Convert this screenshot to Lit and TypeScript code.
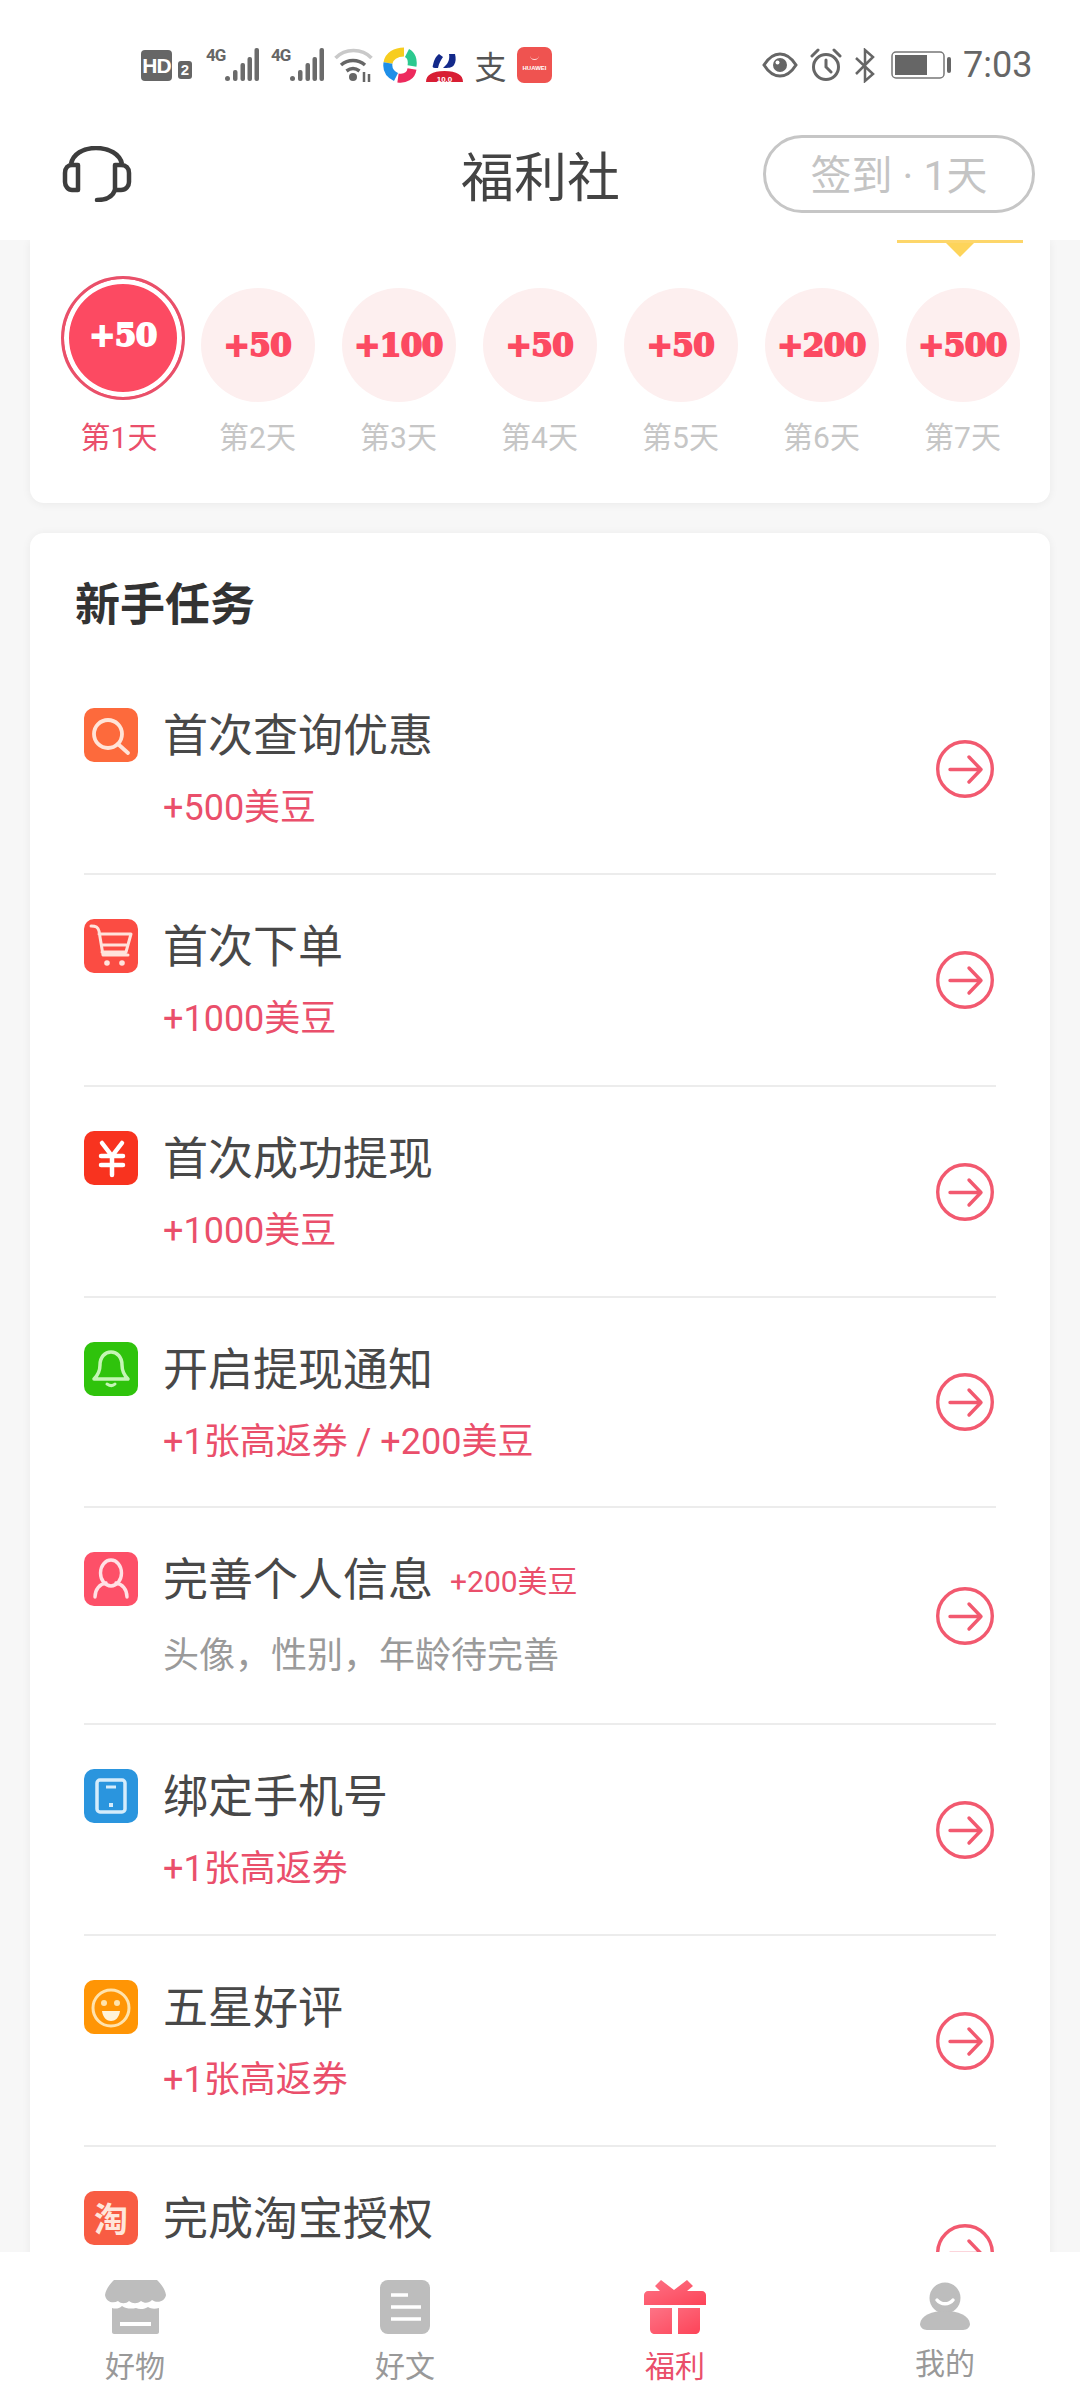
import { LitElement, css, html, svg } from 'lit'
import { customElement } from 'lit/decorators.js'

const DAYS = ['+50', '+50', '+100', '+50', '+50', '+200', '+500']

const TASKS = [
    { title: '首次查询优惠', sub: '+500美豆', icon: 'search', color: '#fd6a3c', h: 211 },
    { title: '首次下单', sub: '+1000美豆', icon: 'cart', color: '#fb4c43', h: 212 },
    { title: '首次成功提现', sub: '+1000美豆', icon: 'yen', color: '#f8331f', h: 211 },
    { title: '开启提现通知', sub: '+1张高返券 / +200美豆', icon: 'bell', color: '#2fc30c', h: 210 },
    { title: '完善个人信息', extra: '+200美豆', sub: '头像，性别，年龄待完善', grey: true, icon: 'user', color: '#fd5068', h: 217 },
    { title: '绑定手机号', sub: '+1张高返券', icon: 'pad', color: '#2a95de', h: 211 },
    { title: '五星好评', sub: '+1张高返券', icon: 'smile', color: '#ff9505', h: 211 },
    { title: '完成淘宝授权', icon: 'tao', color: '#f85c43', h: 211 },
]

const taskIcons: Record<string, unknown> = {
    search: svg`<circle cx="24" cy="26" r="14" fill="none" stroke="#ffe4d8" stroke-width="3.800"/><path d="M34 36l10 9" stroke="#ffe4d8" stroke-width="3.800" stroke-linecap="round"/>`,
    cart: svg`<path d="M7 7c5 0 7 1 8 5l4 24h25M15 15h32l-5 18H18M18 26h24" fill="none" stroke="#ffe3dc" stroke-width="3" stroke-linecap="round" stroke-linejoin="round"/><circle cx="23" cy="44" r="2.800" fill="#ffe3dc"/><circle cx="38" cy="44" r="2.800" fill="#ffe3dc"/>`,
    yen: svg`<path d="M18 12l10 13 10-13M17 25h22M17 34h22M28 25v19" fill="none" stroke="#fff" stroke-width="4.500" stroke-linecap="round" stroke-linejoin="round"/>`,
    bell: svg`<path d="M10 37c4-4 6-8 6-14 0-8 5-13 11-13s11 5 11 13c0 6 2 10 6 14z" fill="none" stroke="#c5f5b5" stroke-width="3.500" stroke-linejoin="round"/><path d="M23 42c3 2 6 2 8 0" fill="none" stroke="#c5f5b5" stroke-width="3" stroke-linecap="round"/>`,
    user: svg`<ellipse cx="27" cy="21" rx="10.500" ry="13" fill="none" stroke="#ffe1e5" stroke-width="3.400"/><path d="M11 45c0-8 5-13 11-14M43 45c0-8-5-13-11-14" fill="none" stroke="#ffe1e5" stroke-width="3.400" stroke-linecap="round"/>`,
    pad: svg`<rect x="13" y="11" width="28" height="32" rx="3" fill="none" stroke="#d5ecfb" stroke-width="3.500"/><path d="M22 18h10" stroke="#d5ecfb" stroke-width="3"/><rect x="25" y="34" width="4" height="4" fill="#d5ecfb"/>`,
    smile: svg`<circle cx="27" cy="28" r="18" fill="none" stroke="#ffe3ad" stroke-width="3"/><circle cx="20" cy="23" r="3" fill="#ffe3ad"/><circle cx="33" cy="23" r="3" fill="#ffe3ad"/><path d="M18 31h18c-1 7-5 10-9 10s-8-3-9-10z" fill="#fff3da"/>`,
}

const signal = html`<svg class="signal" viewBox="0 0 34 36"><g fill="#6b6b6b"><circle cx="2.500" cy="31.500" r="2.500"/><rect x="8" y="23" width="4.500" height="11" rx="2"/><rect x="15.500" y="16" width="4.500" height="18" rx="2"/><rect x="22.500" y="10" width="4.500" height="24" rx="2"/><rect x="29.500" y="1" width="4.500" height="33" rx="2"/></g></svg>`

@customElement('app-root')
export class AppRoot extends LitElement {

    static styles = css`
      :host {
        display: block;
        width: 1080px;
        height: 2400px;
        font-family: Roboto, "Noto Sans CJK SC", sans-serif;
      }

      .page {
        height: 2400px;
        display: flex;
        flex-direction: column;
        background: #f7f7f7;
        overflow: hidden;
      }

      .top {
        height: 240px;
        flex: none;
        background: #fff;
        position: relative;
        z-index: 2;
      }

      .status {
        height: 120px;
        box-sizing: border-box;
        padding: 10px 51px 0 141px;
        display: flex;
        align-items: center;
        color: #666;
      }

      .status svg {
        display: block;
        flex: none;
      }

      .hd {
        width: 31px;
        height: 31px;
        background: #666;
        border-radius: 4px;
        color: #fff;
        font: 700 21px/31px "Liberation Sans", sans-serif;
        text-align: center;
        letter-spacing: -1px;
      }

      .sim {
        width: 14px;
        height: 18px;
        margin: 9px 14px 0 6px;
        background: #666;
        border-radius: 3px;
        color: #fff;
        font: 700 15px/18px "Liberation Sans", sans-serif;
        text-align: center;
      }

      .net {
        position: relative;
        width: 53px;
        height: 36px;
        margin-right: 12px;
      }

      .net + .net {
        margin-right: 10px;
      }

      .net b {
        position: absolute;
        left: 0;
        top: 0;
        font: 700 17px/16px Roboto, sans-serif;
        letter-spacing: -1px;
      }

      .signal {
        position: absolute;
        right: 0;
        top: 0;
        width: 34px;
        height: 36px;
      }

      .swirl {
        margin-left: 10px;
      }

      .badge {
        margin: 6px 0 0 9px;
      }

      .alipay {
        width: 33px;
        margin: 0 10px 0 11px;
        font: 400 32px/36px "Noto Sans CJK SC", sans-serif;
        text-align: center;
        color: #555;
      }

      .store {
        position: relative;
        width: 35px;
        height: 36px;
        border-radius: 7px;
        background: #ef5350;
        color: #fff;
        font: 700 6px/8px "Liberation Sans", sans-serif;
        text-align: center;
        box-sizing: border-box;
        padding-top: 17px;
      }

      .store::before {
        content: "";
        position: absolute;
        left: 13px;
        top: 8px;
        width: 9px;
        height: 4px;
        border-bottom: 1px solid #ffd9d6;
        border-radius: 0 0 6px 6px;
      }

      .status-right {
        margin-left: auto;
        display: flex;
        align-items: center;
      }

      .eye {
        margin-right: 12px;
      }

      .alarm {
        margin-right: 12px;
      }

      .bt {
        margin-right: 16px;
      }

      .battery {
        margin-right: 11px;
      }

      .time {
        font-size: 36px;
        color: #666;
        width: 66px;
        white-space: nowrap;
      }

      .head {
        height: 120px;
        display: grid;
        grid-template-columns: 1fr auto 1fr;
        align-items: center;
        padding: 0 45px 0 62px;
        margin-top: -6px;
      }

      .head svg {
        display: block;
      }

      .head h1 {
        margin: 0 16px 0 0;
        font-size: 53px;
        font-weight: 400;
        color: #444;
      }

      .sign {
        justify-self: end;
        width: 272px;
        height: 78px;
        box-sizing: border-box;
        border: 3px solid #c6c6c6;
        border-radius: 39px;
        text-align: center;
        font-size: 41px;
        line-height: 76px;
        color: #c4c4c4;
        white-space: pre;
      }

      .scroll {
        flex: 1;
        min-height: 0;
        overflow: hidden;
        padding: 0 30px;
      }

      .card {
        background: #fff;
        border-radius: 14px;
        box-shadow: 0 1px 10px rgba(0, 0, 0, 0.06);
      }

      .checkin {
        position: relative;
        height: 263px;
        box-sizing: border-box;
        padding: 36px 0 0 31px;
        border-radius: 0 0 14px 14px;
        display: flex;
        align-items: flex-start;
      }

      .tip {
        position: absolute;
        left: 867px;
        top: 0;
        width: 126px;
        height: 3px;
        background: #fdd66a;
      }

      .tip::after {
        content: "";
        position: absolute;
        left: 49px;
        top: 3px;
        border: 14px solid transparent;
        border-top: 14px solid #fdd45a;
        border-bottom: 0;
      }

      .day {
        width: 141px;
        flex: none;
        display: flex;
        flex-direction: column;
        align-items: center;
        font-size: 30px;
        color: #c6c6c6;
      }

      .coin {
        width: 114px;
        height: 114px;
        margin-top: 12px;
        border-radius: 50%;
        background: #fdefef;
        color: #fc4a62;
        display: flex;
        align-items: center;
        justify-content: center;
        font: 700 31px/1 "DejaVu Serif", serif;
        -webkit-text-stroke: 1.800px currentColor;
        letter-spacing: -0.5px;
        box-sizing: border-box;
      }

      .day.on {
        width: 124px;
        margin-right: 2px;
        color: #ea4f6b;
      }

      .day.on span {
        margin-left: -8px;
      }

      .day.on .coin {
        width: 124px;
        height: 124px;
        margin-top: 0;
        margin-bottom: 2px;
        background: #fc4a62;
        border: 3px solid #e9506a;
        box-shadow: inset 0 0 0 5px #fff;
        color: #fff;
        padding-bottom: 6px;
      }

      .day span {
        margin-top: 16px;
        line-height: 40px;
      }

      .tasks {
        margin-top: 30px;
        padding: 49px 54px 0;
      }

      h2 {
        margin: 0 0 34px -9px;
        height: 48px;
        line-height: 48px;
        font-size: 45px;
        font-weight: 700;
        color: #333;
      }

      .task {
        box-sizing: border-box;
        display: grid;
        grid-template-columns: 54px 1fr 58px;
        column-gap: 25px;
        align-items: center;
        border-bottom: 2px solid #ececec;
        padding-right: 2px;
      }

      .task:last-child {
        border-bottom: 0;
      }

      .mark {
        align-self: start;
        width: 54px;
        height: 54px;
        border-radius: 10px;
        margin-top: 44px;
        display: flex;
        align-items: center;
        justify-content: center;
        color: #ffe6da;
        font: 700 34px/1 "Noto Sans CJK SC", sans-serif;
      }

      .mark svg {
        display: block;
      }

      .text {
        align-self: start;
        min-width: 0;
      }

      .name {
        margin-top: 39px;
        height: 58px;
        display: flex;
        align-items: center;
        font-size: 45px;
        color: #484848;
      }

      .name em {
        font-style: normal;
        font-size: 30px;
        color: #ea4f6b;
        margin-left: 17px;
        margin-top: 6px;
      }

      .sub {
        margin-top: 22px;
        font-size: 36px;
        line-height: 50px;
        color: #ea4f6b;
      }

      .sub.grey {
        margin-top: 26px;
        color: #9a9a9a;
      }

      .go {
        display: block;
      }

      .nav {
        height: 148px;
        flex: none;
        background: #fff;
        display: grid;
        grid-template-columns: repeat(4, 1fr);
        position: relative;
        z-index: 2;
      }

      .tab {
        display: flex;
        flex-direction: column;
        align-items: center;
        padding-top: 28px;
        font-size: 30px;
        line-height: 36px;
        color: #999;
      }

      .tab svg {
        display: block;
        margin-bottom: 15px;
      }

      .tab.on {
        color: #ea4f6b;
      }

      .tab.me span {
        margin-top: -3px;
      }
    `

    renderGo () {
        return html`<svg class="go" width="58" height="58" viewBox="0 0 58 58" fill="none" stroke="#f2596f" stroke-width="3.400" stroke-linecap="round" stroke-linejoin="round">
            <circle cx="29" cy="29" r="27.300"/>
            <path d="M14 29.500h31M33 17l12 12.500L33 42"/>
        </svg>`
    }

    renderTask (t: any) {
        return html`
            <div class="task" style="height:${t.h}px">
                <div class="mark" style="background:${t.color}">
                    ${t.icon === 'tao' ? '淘' : html`<svg width="54" height="54" viewBox="0 0 54 54">${taskIcons[t.icon]}</svg>`}
                </div>
                <div class="text">
                    <div class="name">${t.title}${t.extra ? html`<em>${t.extra}</em>` : ''}</div>
                    ${t.sub ? html`<div class="sub ${t.grey ? 'grey' : ''}">${t.sub}</div>` : ''}
                </div>
                ${this.renderGo()}
            </div>
        `
    }

    render () {
        return html`
            <div class="page">
                <div class="top">
                    <div class="status">
                        <div class="hd">HD</div>
                        <div class="sim">2</div>
                        <div class="net"><b>4G</b>${signal}</div>
                        <div class="net"><b>4G</b>${signal}</div>
                        <svg width="39" height="34" viewBox="0 0 39 34" fill="none">
                            <path d="M1.500 10C11 0 28 0 37.500 10" stroke="#c9c9c9" stroke-width="3.500"/>
                            <path d="M7 17c7-6 17-6 24 0M12.500 23c4-3 9-3 13 0" stroke="#666" stroke-width="3.500"/>
                            <circle cx="19" cy="29" r="4" fill="#666"/>
                            <path d="M30 24v10M35 34v-8" stroke="#666" stroke-width="2.500"/>
                        </svg>
                        <svg class="swirl" width="34" height="36" viewBox="0 0 34 36" fill="none" stroke-width="9">
                            <path d="M5 16C6 9 13 5 21 5" stroke="#f7cd1f"/>
                            <path d="M24 6c4 2 6 7 5 13" stroke="#2cc98f"/>
                            <path d="M29 22c-1 7-7 10-14 9" stroke="#ed2a5d"/>
                            <path d="M5 16c-1 6 2 11 8 14" stroke="#1f8fe8"/>
                        </svg>
                        <svg class="badge" width="37" height="30" viewBox="0 0 37 30">
                            <path d="M13 1c-4 3-5 7-6 11-1 2 0 3 2 3h3c1-5 3-8 5-11zM29 1c-2 0-3 0-6 0 1 5-1 9-3 11l-3 3c5 0 9 0 11-3 2-3 2-7 1-11z" fill="#13298a"/>
                            <path d="M0 29c0-7 6-11 18.500-11S37 22 37 29z" fill="#d81e34"/>
                            <text x="18.500" y="28.500" font-size="8" font-weight="700" fill="#fff" text-anchor="middle" font-family="Liberation Sans">10.0</text>
                        </svg>
                        <div class="alipay">支</div>
                        <div class="store">HUAWEI</div>
                        <div class="status-right">
                            <svg class="eye" width="36" height="26" viewBox="0 0 36 26" fill="none">
                                <path d="M2 13C7 5 12 2 18 2s11 3 16 11c-5 8-10 11-16 11S7 21 2 13z" stroke="#666" stroke-width="3"/>
                                <circle cx="18" cy="13" r="7" fill="#666"/>
                                <circle cx="15.500" cy="10.500" r="2" fill="#fff"/>
                            </svg>
                            <svg class="alarm" width="32" height="34" viewBox="0 0 32 34" fill="none" stroke="#666" stroke-width="3">
                                <circle cx="16" cy="19" r="12.500"/>
                                <path d="M16 12v7l5 5M2 8l6-6M30 8l-6-6" stroke-linecap="round"/>
                            </svg>
                            <svg class="bt" width="21" height="35" viewBox="0 0 21 35" fill="none" stroke="#666" stroke-width="2.500">
                                <path d="M2 10l17 16-8 7V2l8 7L2 26"/>
                            </svg>
                            <svg class="battery" width="61" height="28" viewBox="0 0 61 28">
                                <rect x="1" y="1" width="52" height="26" rx="4" fill="none" stroke="#777" stroke-width="1.500"/>
                                <rect x="4" y="4" width="32" height="20" fill="#666"/>
                                <rect x="56" y="6" width="4" height="16" rx="2" fill="#666"/>
                            </svg>
                            <span class="time">7:03</span>
                        </div>
                    </div>
                    <div class="head">
                        <svg width="70" height="56" viewBox="0 0 70 56" fill="none" stroke="#3d3d3d" stroke-width="4.500">
                            <path d="M9 18C11 8 21 2 34 2s24 6 26 16"/>
                            <path d="M16 19h-6c-4 0-7 3-7 8v9c0 4 3 8 7 8h6zM53 19h6c5 0 8 3 8 8v9c0 4-3 8-8 8h-6z" stroke-linejoin="round"/>
                            <path d="M53 44c-2 6-8 10-18 10" stroke-linecap="round"/>
                        </svg>
                        <h1>福利社</h1>
                        <div class="sign">签到 · 1天</div>
                    </div>
                </div>
                <div class="scroll">
                    <div class="card checkin">
                        <div class="tip"></div>
                        ${DAYS.map((d, i) => html`
                            <div class="day ${i === 0 ? 'on' : ''}">
                                <div class="coin">${d}</div>
                                <span>第${i + 1}天</span>
                            </div>
                        `)}
                    </div>
                    <div class="card tasks">
                        <h2>新手任务</h2>
                        ${TASKS.map((t) => this.renderTask(t))}
                    </div>
                </div>
                <div class="nav">
                    <div class="tab">
                        <svg width="61" height="54" viewBox="0 0 61 54">
                            <path d="M9 0h43c4 4 8 9 9 15-1 6-8 9-14 5-3 3-7 4-11 1-4 3-8 3-12 0-3 3-8 3-11 0C8 24 1 22 0 15 1 9 5 4 9 0z" fill="#bdbdbd"/>
                            <path d="M7 28c3 1 7 1 10-2 4 3 10 3 14 2 4 2 9 1 12-1 3 2 7 2 11 1v24c0 1-1 2-2 2H9c-1 0-2-1-2-2z" fill="#bdbdbd"/>
                            <rect x="15" y="42" width="31" height="4" fill="#fff"/>
                        </svg>
                        <span>好物</span>
                    </div>
                    <div class="tab">
                        <svg width="50" height="54" viewBox="0 0 50 54">
                            <rect width="50" height="54" rx="8" fill="#bdbdbd"/>
                            <path d="M11 15h17M11 27h30M11 39h30" stroke="#fff" stroke-width="3.500"/>
                        </svg>
                        <span>好文</span>
                    </div>
                    <div class="tab on">
                        <svg width="62" height="54" viewBox="0 0 62 54">
                            <defs><linearGradient id="g" x1="0" y1="0" x2="1" y2="1"><stop offset="0" stop-color="#fd7386"/><stop offset="1" stop-color="#fd4458"/></linearGradient></defs>
                            <path d="M11 6l6-6 13 10L43 0l6 6-6 5h15c2 0 4 2 4 4v10H0V15c0-2 2-4 4-4h12z" fill="url(#g)"/>
                            <path d="M6 28h22v26H11c-3 0-5-2-5-5zM34 28h22v21c0 3-2 5-5 5H34z" fill="url(#g)"/>
                        </svg>
                        <span>福利</span>
                    </div>
                    <div class="tab me">
                        <svg width="50" height="54" viewBox="0 0 50 54">
                            <circle cx="25" cy="18" r="15.500" fill="#bdbdbd"/>
                            <path d="M17 20c4 5 12 5 16 0" fill="none" stroke="#fff" stroke-width="3.500" stroke-linecap="round"/>
                            <path d="M0 44c1-9 12-13 25-13s24 4 25 13c0 3-3 6-7 6H7c-4 0-7-3-7-6z" fill="#bdbdbd"/>
                        </svg>
                        <span>我的</span>
                    </div>
                </div>
            </div>
        `
    }
}
